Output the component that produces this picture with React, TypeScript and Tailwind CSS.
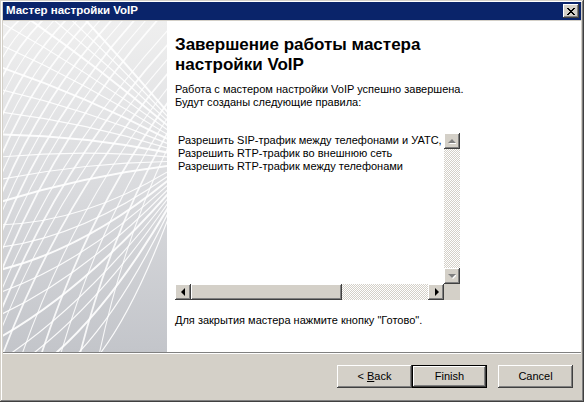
import React from "react";

const bevel =
  "shadow-[inset_-1px_-1px_#404040,inset_1px_1px_#ffffff,inset_-2px_-2px_#808080,inset_2px_2px_#d4d0c8]";
const checker =
  "bg-[repeating-conic-gradient(#ffffff_0_25%,#d4d0c8_0_50%)] bg-size-[2px_2px]";

// point on the left/bottom edge of the panel, t in [0,1]
function edge(t: number): [number, number] {
  const total = 420 + 100;
  const d = t * total;
  if (d < 420) return [-4, -90 + d];
  return [-4 + (d - 420), 334];
}

function SidePanel() {
  // lines that run to the right edge, bunching up near the middle
  const famA = Array.from({ length: 24 }, (_, i) => {
    const t = i / 23;
    const [sx, sy] = edge(t);
    const ey = 95 + t * 95;
    const cx = sx + (168 - sx) * 0.5;
    const cy = sy + (ey - sy) * 0.5 + (sy > 200 ? 25 : -8);
    return `M ${sx} ${sy} Q ${cx} ${cy} 168 ${ey}`;
  });
  // crossing lines, going up to the top and upper right edge
  const famB = Array.from({ length: 22 }, (_, i) => {
    const t = 0.22 + (i / 21) * 0.78;
    const [sx, sy] = edge(t);
    const u = i / 21;
    const ex = u < 0.6 ? 20 + u * 240 : 168;
    const ey = u < 0.6 ? -4 : (u - 0.6) * 300;
    const cx = sx + (ex - sx) * 0.35;
    const cy = sy + (ey - sy) * 0.55;
    return `M ${sx} ${sy} Q ${cx} ${cy} ${ex} ${ey}`;
  });
  return (
    <div className="w-[164px] h-full shrink-0 bg-gradient-to-b from-[#efefef] via-[#dadbde] to-[#c3c5ca]">
      <svg width="164" height="331" viewBox="0 0 164 331" className="block">
        {famA.map((d, i) => (
          <path key={"a" + i} d={d} fill="none" stroke="#ffffff" strokeWidth={i % 3 === 0 ? 2 : 1.2} opacity={0.9} />
        ))}
        {famB.map((d, i) => (
          <path key={"b" + i} d={d} fill="none" stroke="#ffffff" strokeWidth={i % 2 === 0 ? 1.8 : 1.1} opacity={0.85} />
        ))}
      </svg>
    </div>
  );
}

function Arrow({ dir, disabled }: { dir: "up" | "down" | "left" | "right"; disabled?: boolean }) {
  const pts = {
    up: "4,1 0,5 8,5",
    down: "0,1 8,1 4,5",
    left: "4,0 0,4 4,8",
    right: "1,0 5,4 1,8",
  }[dir];
  const w = dir === "up" || dir === "down" ? 8 : 5;
  const h = dir === "up" || dir === "down" ? 6 : 8;
  return (
    <svg width={w} height={h} viewBox={`0 0 ${w} ${h}`} className="block">
      {disabled && <polygon points={pts} fill="#ffffff" transform="translate(1 1)" />}
      <polygon points={pts} fill={disabled ? "#808080" : "#000000"} />
    </svg>
  );
}

function SBtn({ children }: { children: React.ReactNode }) {
  return (
    <div className={`w-[16px] h-[16px] shrink-0 bg-[#d4d0c8] flex items-center justify-center ${bevel}`}>
      {children}
    </div>
  );
}

function ListBox() {
  const rules = [
    "Разрешить SIP-трафик между телефонами и УАТС,",
    "Разрешить RTP-трафик во внешнюю сеть",
    "Разрешить RTP-трафик между телефонами",
  ];
  return (
    <div className="w-[285px] h-[167px] mt-[24px] grid grid-cols-[1fr_16px] grid-rows-[1fr_16px] bg-white">
      <div className="overflow-hidden pl-[3px] pt-[1px] leading-[13px] whitespace-nowrap">
        {rules.map((r) => (
          <div key={r}>{r}</div>
        ))}
      </div>
      <div className={`flex flex-col ${checker}`}>
        <SBtn>
          <Arrow dir="up" disabled />
        </SBtn>
        <div className="flex-1" />
        <SBtn>
          <Arrow dir="down" disabled />
        </SBtn>
      </div>
      <div className={`flex ${checker}`}>
        <SBtn>
          <Arrow dir="left" />
        </SBtn>
        <div className={`w-[151px] h-[16px] bg-[#d4d0c8] ${bevel}`} />
        <div className="flex-1" />
        <SBtn>
          <Arrow dir="right" />
        </SBtn>
      </div>
      <div className="bg-[#d4d0c8]" />
    </div>
  );
}

function Button({ children, isDefault }: { children: React.ReactNode; isDefault?: boolean }) {
  return (
    <div
      className={`w-[75px] h-[23px] flex items-center justify-center bg-[#d4d0c8] ${
        isDefault
          ? "border border-black shadow-[inset_-1px_-1px_#404040,inset_1px_1px_#ffffff,inset_-2px_-2px_#808080]"
          : bevel
      }`}
    >
      {children}
    </div>
  );
}

export default function App() {
  return (
    <div
      className="w-[584px] h-[402px] bg-[#d4d0c8] flex flex-col pt-[2px] px-[3px] pb-[2px] text-[11px] text-black shadow-[inset_-1px_-1px_#404040,inset_1px_1px_#d4d0c8,inset_-2px_-2px_#808080,inset_2px_2px_#ffffff]"
      style={{ fontFamily: '"Liberation Sans", Arial, sans-serif' }}
    >
      <div className="h-[18px] bg-[#0a246a] flex items-center justify-between pl-[3px] pr-[2px]">
        <span className="text-white font-bold text-[11.5px]">Мастер настройки VoIP</span>
        <div className={`w-[16px] h-[14px] bg-[#d4d0c8] flex items-center justify-center ${bevel}`}>
          <svg width="8" height="7" viewBox="0 0 8 7" className="block">
            <path d="M0 0 L7 7 M1 0 L8 7 M7 0 L0 7 M8 0 L1 7" stroke="#000" strokeWidth="1" shapeRendering="crispEdges" />
          </svg>
        </div>
      </div>
      <div className="flex h-[331px] mt-[1px] bg-white">
        <SidePanel />
        <div className="flex-1 flex flex-col pl-[8px] pt-[14px]">
          <h1 className="text-[17px] font-bold leading-[20px]">
            Завершение работы мастера
            <br />
            настройки VoIP
          </h1>
          <p className="mt-[8px] leading-[13px]">
            Работа с мастером настройки VoIP успешно завершена.
            <br />
            Будут созданы следующие правила:
          </p>
          <ListBox />
          <p className="mt-[14px] leading-[13px]">Для закрытия мастера нажмите кнопку "Готово".</p>
        </div>
      </div>
      <div className="h-[1px] bg-[#808080]" />
      <div className="h-[1px] bg-white" />
      <div className="flex-1 flex items-start justify-end pt-[11px] pr-[8px]">
        <Button>
          &lt; <span className="underline ml-[3px]">B</span>ack
        </Button>
        <Button isDefault>Finish</Button>
        <div className="w-[11px]" />
        <Button>Cancel</Button>
      </div>
    </div>
  );
}
